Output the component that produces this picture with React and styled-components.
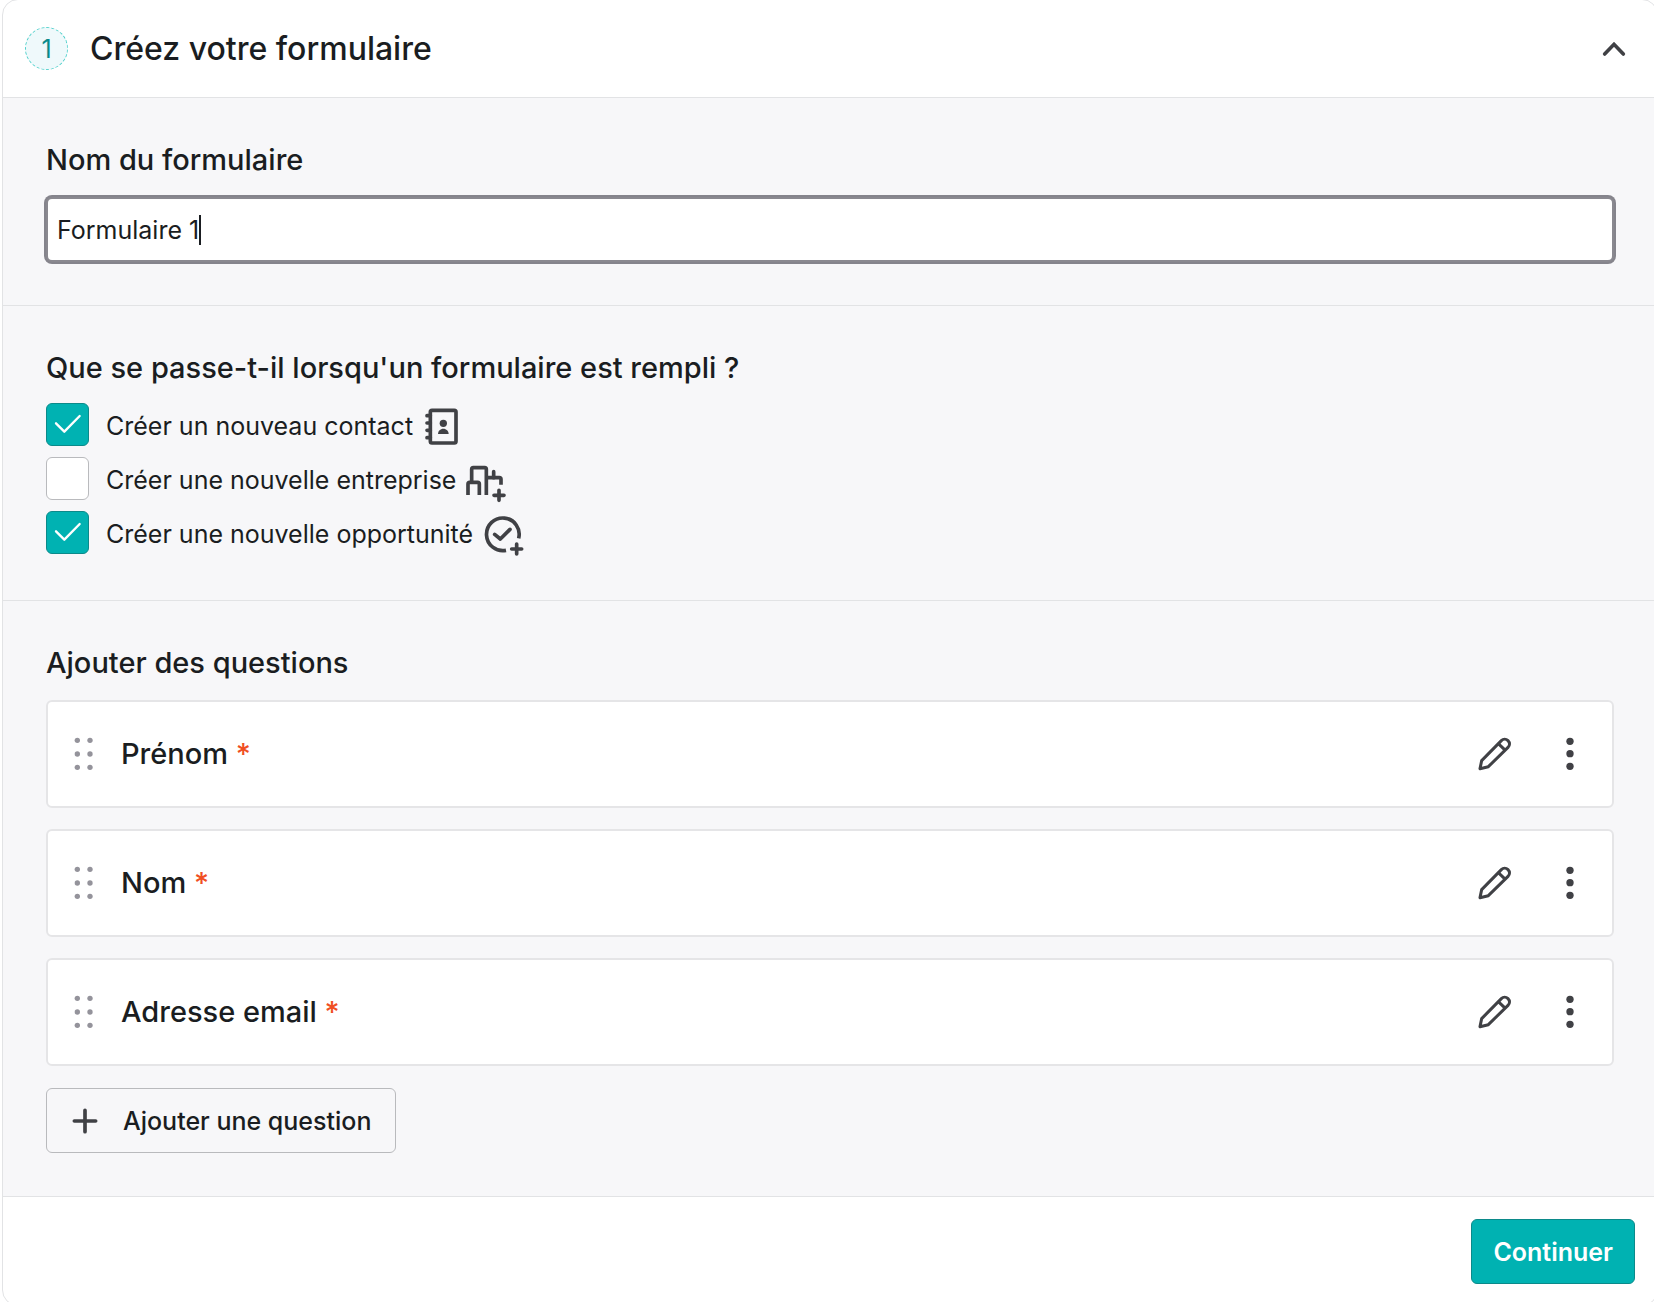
import React, { useState } from 'react'
import styled, { createGlobalStyle } from 'styled-components';

const QUESTIONS = ['Prénom', 'Nom', 'Adresse email'];

function ContactIcon() {
  return (
    <RowIcon viewBox="0 0 126 147" aria-hidden="true">
      <rect x="22" y="31" width="77" height="98" rx="5" />
      <path d="M12 47h10M12 69h10M12 91h10M12 113h10" />
      <circle className="solid" cx="61" cy="70" r="11" />
      <path className="solid" d="M45 102c0-9 7-16 16-16s16 7 16 16z" />
    </RowIcon>
  )
}

function CompanyIcon() {
  return (
    <RowIcon viewBox="0 0 126 147" aria-hidden="true">
      <path className="butt" d="M6 123V90q0-5 5-5h24q5 0 5 5v33" />
      <path className="butt" d="M17 85V46q0-5 5-5h34q5 0 5 5v77" />
      <path className="butt" d="M61 71h39q5 0 5 5v16" />
      <path d="M83 71V53" />
      <path d="M99 109v30M84 124h30" />
    </RowIcon>
  )
}

function DealIcon() {
  return (
    <RowIcon viewBox="0 0 126 147" aria-hidden="true">
      <path className="butt" d="M69 127A49 49 0 1 1 107 91" />
      <path d="M35 79l17 14 29-29" />
      <path d="M101 108v30M86 123h30" />
    </RowIcon>
  )
}

const ACTIONS = [
  { id: 'contact', label: 'Créer un nouveau contact', icon: ContactIcon, checked: true },
  { id: 'company', label: 'Créer une nouvelle entreprise', icon: CompanyIcon, checked: false },
  { id: 'deal', label: 'Créer une nouvelle opportunité', icon: DealIcon, checked: true },
];

function Question(props) {
  return (
    <QuestionCard>
      <DragHandle type="button" aria-label="Déplacer">
        <svg width="20" height="36" viewBox="0 0 60 108">
          {[13, 54, 94].map((y) => (
            <React.Fragment key={y}>
              <circle cx="10" cy={y} r="8" />
              <circle cx="48" cy={y} r="8" />
            </React.Fragment>
          ))}
        </svg>
      </DragHandle>
      <QuestionName>
        {props.name} <Required>*</Required>
      </QuestionName>
      <QuestionTools>
        <IconButton type="button" aria-label="Modifier">
          <svg width="36" height="36" viewBox="0 0 108 108">
            <path d="M9 98L14 74 73 14c6-6 14-6 20 0s6 14 0 20L34 92z" />
            <path d="M64 23L85 43" />
          </svg>
        </IconButton>
        <IconButton type="button" aria-label="Plus d'options">
          <svg width="12" height="36" viewBox="0 0 36 108">
            <circle className="dot" cx="18" cy="16" r="11" />
            <circle className="dot" cx="18" cy="53" r="11" />
            <circle className="dot" cx="18" cy="91" r="11" />
          </svg>
        </IconButton>
      </QuestionTools>
    </QuestionCard>
  )
}

function App() {
  const [name, setName] = useState('Formulaire 1');

  return (
    <Page>
      <GlobalStyle />
      <Card>
        <Header>
          <Step>1</Step>
          <Title>Créez votre formulaire</Title>
          <IconButton type="button" aria-label="Réduire">
            <svg width="24" height="16" viewBox="0 0 72 48">
              <path className="chevron" d="M8 39l28-29 28 29" />
            </svg>
          </IconButton>
        </Header>

        <Section>
          <Label htmlFor="form-name">Nom du formulaire</Label>
          <Field>
            <NameInput
              id="form-name"
              value={name}
              onChange={(e) => setName(e.target.value)}
            />
            <Caret />
          </Field>
        </Section>

        <Section>
          <Heading>Que se passe-t-il lorsqu'un formulaire est rempli ?</Heading>
          <ActionList>
            {ACTIONS.map(({ id, label, icon: Icon, checked }) => (
              <ActionRow key={id}>
                <Checkbox type="checkbox" id={id} defaultChecked={checked} />
                <CheckMark viewBox="0 0 129 129" aria-hidden="true">
                  <path d="M30 61l25 25 46-47" />
                </CheckMark>
                <ActionLabel htmlFor={id}>{label}</ActionLabel>
                <Icon />
              </ActionRow>
            ))}
          </ActionList>
        </Section>

        <Section>
          <Heading>Ajouter des questions</Heading>
          <QuestionList>
            {QUESTIONS.map((question) => (
              <Question key={question} name={question} />
            ))}
          </QuestionList>
          <AddButton type="button">
            <svg width="28" height="28" viewBox="0 0 84 84" aria-hidden="true">
              <path d="M42 10v64M10 42h64" />
            </svg>
            Ajouter une question
          </AddButton>
        </Section>

        <Footer>
          <SubmitButton type="submit">Continuer</SubmitButton>
        </Footer>
      </Card>
    </Page>
  )
}

const GlobalStyle = createGlobalStyle`
  *, *::before, *::after {
    box-sizing: border-box;
  }

  body {
    margin: 0;
    background: #ffffff;
    color: #1a1d21;
    font-family: Inter, "Liberation Sans", sans-serif;
  }

  button, input {
    font-family: inherit;
    color: inherit;
  }
`;

const Page = styled.div`
  overflow: hidden;
  padding-left: 2px;
`;

/* the card runs slightly past the window on the other three sides */
const Card = styled.form`
  margin: -1px -4px -4px 0;
  border: 1px solid #e2e3e5;
  border-radius: 16px;
  overflow: hidden;
  background: #ffffff;
`;

const Header = styled.div`
  display: flex;
  align-items: center;
  height: 97px;
  padding: 0 31px 0 22px;
`;

const Step = styled.span`
  display: flex;
  align-items: center;
  justify-content: center;
  width: 43px;
  height: 43px;
  border: 1px dashed #4fd0cb;
  border-radius: 50%;
  background: #eff9fb;
  color: #0b8a8a;
  font-size: 25px;
`;

const Title = styled.h1`
  flex: 1;
  margin: 0 0 0 22px;
  font-size: 32px;
  font-weight: 500;
  line-height: 40px;
`;

const Section = styled.div`
  padding: 43px;
  border-top: 1px solid #e2e3e5;
  background: #f7f7f9;
`;

const Label = styled.label`
  display: block;
  font-size: 29px;
  font-weight: 500;
  line-height: 38px;
`;

const Heading = styled.h2`
  margin: 0;
  font-size: 29px;
  font-weight: 500;
  line-height: 38px;
`;

const Field = styled.div`
  display: flex;
  align-items: center;
  height: 65px;
  margin-top: 18px;
  padding: 0 9px;
  border: 2px solid #8a8990;
  border-radius: 6px;
  box-shadow: 0 0 0 2px #85848c;
  background: #ffffff;
`;

const NameInput = styled.input`
  field-sizing: content;
  padding: 0;
  border: none;
  outline: none;
  background: transparent;
  caret-color: transparent;
  font-size: 25px;
  line-height: 36px;
`;

const Caret = styled.span`
  width: 2px;
  height: 30px;
  background: #1a1d21;
`;

const ActionList = styled.div`
  display: flex;
  flex-direction: column;
  gap: 5px;
  margin-top: 13px;
`;

const ActionRow = styled.div`
  position: relative;
  display: flex;
  align-items: center;
  height: 49px;
`;

const Checkbox = styled.input`
  appearance: none;
  width: 43px;
  height: 43px;
  margin: 0;
  border: 1px solid #b9babd;
  border-radius: 6px;
  background: #ffffff;

  &:checked {
    border-color: #0b8a8a;
    background: #00b2b2;
  }
`;

/* tick laid over the checkbox, white so it only shows when checked */
const CheckMark = styled.svg`
  position: absolute;
  left: 0;
  width: 43px;
  height: 43px;
  pointer-events: none;
  fill: none;
  stroke: #ffffff;
  stroke-width: 7;
  stroke-linecap: round;
  stroke-linejoin: round;
`;

const ActionLabel = styled.label`
  margin: 2px 10px 0 17px;
  font-size: 25px;
  line-height: 36px;
`;

const RowIcon = styled.svg`
  width: 42px;
  height: 49px;
  fill: none;
  stroke: #404145;
  stroke-width: 11;
  stroke-linecap: round;
  stroke-linejoin: round;

  .solid {
    fill: #404145;
    stroke: none;
  }

  .butt {
    stroke-linecap: butt;
  }
`;

const QuestionList = styled.div`
  display: flex;
  flex-direction: column;
  gap: 21px;
  margin-top: 18px;
`;

const QuestionCard = styled.div`
  display: flex;
  align-items: center;
  height: 108px;
  padding: 0 36px 0 26px;
  border: 2px solid #e5e5e7;
  border-radius: 6px;
  background: #ffffff;
`;

const DragHandle = styled.button`
  display: flex;
  padding: 0;
  border: none;
  background: transparent;
  fill: #94939b;
  cursor: grab;
`;

const QuestionName = styled.span`
  flex: 1;
  margin-left: 27px;
  font-size: 29px;
  font-weight: 500;
  line-height: 38px;
`;

const Required = styled.span`
  color: #f04f23;
`;

const QuestionTools = styled.div`
  display: flex;
  gap: 51px;
`;

const IconButton = styled.button`
  display: flex;
  padding: 0;
  border: none;
  background: transparent;
  cursor: pointer;

  svg {
    fill: none;
    stroke: #404145;
    stroke-width: 9;
    stroke-linejoin: round;
  }

  .dot {
    fill: #404145;
    stroke: none;
  }

  .chevron {
    stroke-width: 11;
    stroke-linecap: round;
    stroke-linejoin: miter;
  }
`;

const AddButton = styled.button`
  display: flex;
  align-items: center;
  gap: 24px;
  height: 65px;
  margin-top: 22px;
  padding: 0 24px;
  border: 1px solid #b9babd;
  border-radius: 6px;
  background: transparent;
  font-size: 25px;
  font-weight: 500;
  cursor: pointer;

  svg {
    stroke: #404145;
    stroke-width: 11;
    stroke-linecap: round;
  }
`;

const Footer = styled.div`
  display: flex;
  justify-content: flex-end;
  padding: 22px 22px 21px;
  border-top: 1px solid #e2e3e5;
`;

const SubmitButton = styled.button`
  height: 65px;
  padding: 0 21px;
  border: 1px solid #0b8a8a;
  border-radius: 6px;
  background: #00b2b2;
  color: #ffffff;
  font-size: 25px;
  font-weight: 600;
  cursor: pointer;
`;


export default App
